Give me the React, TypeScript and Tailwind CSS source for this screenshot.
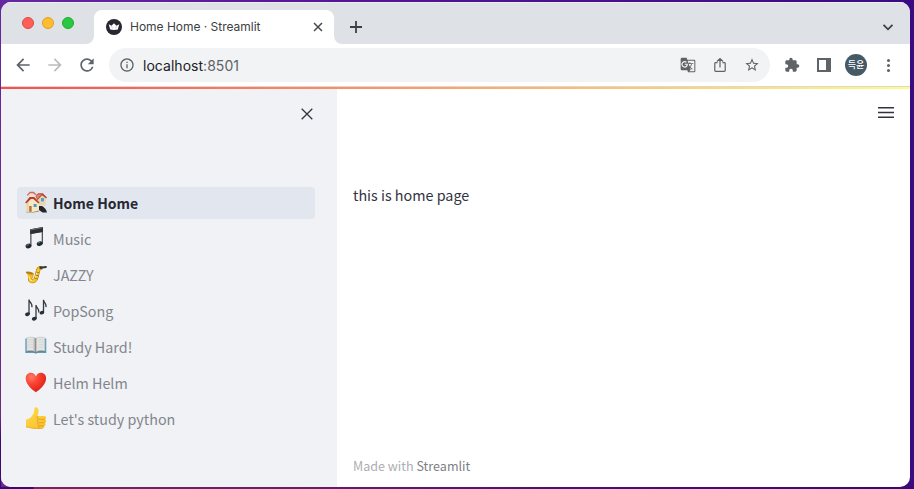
import type { ReactNode } from "react";
import {
  MdArrowBack,
  MdArrowForward,
  MdExtension,
  MdGTranslate,
  MdInfoOutline,
  MdRefresh,
  MdStarBorder,
} from "react-icons/md";

function HousesIcon() {
  return (
    <svg viewBox="0 0 22 22" className="h-[22px] w-[22px]">
      <path d="M2.500 3.500L5 1h4l2.500 3-2 3H3z" fill="#f0ddd3" />
      <path d="M1.800 4L4.800.7h4L12 4l-.8.6L8 2.200H5.300L2.600 4.800z" fill="#cf6a62" />
      <path d="M12.500 6L16.500 3.500 20.800 6.500v8h-7.500z" fill="#e9d7ae" />
      <path d="M10.500 5.500L13 2.200h4.800L22 6.600l-.8.8-4.200-3.200-4.500 5z" fill="#b9453a" />
      <path d="M13 3.200h3.500L12.500 8l-1.700-2z" fill="#d78375" />
      <rect x="16" y="7" width="3" height="3.400" fill="#5aa2cc" />
      <path d="M12.500 15h4.500c1.800 1 4.500 3.200 5 6.500h-4.500L14 19z" fill="#26262a" />
      <path d="M1.500 11.500L5 6.500h4.500l4.500 5.500v7.500L7 21.500l-5.500-1z" fill="#f8e8c2" />
      <path d="M1.500 11.500L3.800 9v11.800l-2.300-.5z" fill="#ead5a6" />
      <path d="M.2 11.500L4.600 6h4.600l5.300 5.500-.9 1L8.200 8H6L1.200 12.600z" fill="#b63c2e" />
      <rect x="8.600" y="13" width="3" height="3" fill="#4a9bc8" />
      <rect x="4.200" y="15" width="2.400" height="5.800" fill="#b0703f" />
      <path d="M1 20.700l6 .6 7-1.800v1l-6.500 1.300-6.500-.5z" fill="#8a8a68" />
    </svg>
  );
}

function NoteIcon() {
  return (
    <svg viewBox="0 0 22 22" className="h-[22px] w-[22px]">
      <path d="M5.200 2.500L18 0v17h-1.300V5L6.500 7V19H5.200z" fill="#50555b" />
      <path d="M5.200 2.300L18 0v5L5.200 7z" fill="#2f2e32" />
      <path d="M5.600 2.900l12-2.200" stroke="#7f7b82" strokeWidth=".8" />
      <ellipse cx="3.500" cy="19" rx="3" ry="2.300" transform="rotate(-15 3.500 19)" fill="#202b33" />
      <ellipse cx="14.700" cy="16.600" rx="3" ry="2.300" transform="rotate(-15 14.700 16.600)" fill="#202b33" />
      <path d="M1.700 18.500l2-1M12.900 16.100l2-1" stroke="#77848c" strokeWidth="1" />
    </svg>
  );
}

function SaxIcon() {
  return (
    <svg viewBox="0 0 22 22" className="h-[22px] w-[22px]" fill="none" strokeLinecap="round">
      <path d="M15.500 5.200c-2 0-2.500 1.500-3 4.300-.5 3.500-1.200 7.700-4 8.500-2.800.6-4-1-3.300-3.300L6.500 12" stroke="#b17a0c" strokeWidth="4.200" />
      <path d="M15.500 5.200c-2 0-2.500 1.500-3 4.300-.5 3.500-1.200 7.700-4 8.500-2.800.6-4-1-3.300-3.300L6.500 12" stroke="#f7c62f" strokeWidth="3.100" />
      <path d="M.8 9.300l7.800 1.500-2 4.500-3.600-.3c.2-2-.4-3.800-2.200-5.700z" fill="#f0b729" />
      <ellipse cx="4.700" cy="10" rx="4" ry="1.200" transform="rotate(12 4.700 10)" fill="#b67e14" />
      <path d="M4.300 13.500c-.4 2.600.5 4 2.500 4.100M12 8.500l-1.500 6" stroke="#ffec88" strokeWidth="1" />
      <path d="M11.500 9l2.500.8M10.800 12l2.500.8M9.800 15l2.500 1" stroke="#8d640b" strokeWidth=".8" />
      <path d="M14.500 3l2.700.8v2l-2.700.4z" fill="#3a3a32" />
      <path d="M17 4.500l4-.5" stroke="#34383a" strokeWidth="1.800" />
    </svg>
  );
}

function NotesIcon() {
  return (
    <svg viewBox="0 0 22 22" className="h-[22px] w-[22px]" fill="none" stroke="#343c42" strokeWidth="1.300">
      <path d="M4 15V.5c.2 3 4.200 4 2.700 7.800M11 19.800V6c.2 3 4 4 2.500 7.500M18.500 13.500V.8c.2 3 3.500 4 2.300 7.300" />
      <g fill="#25313a" stroke="none">
        <ellipse cx="2.500" cy="15.200" rx="2.500" ry="1.800" transform="rotate(-20 2.500 15.200)" />
        <ellipse cx="9.300" cy="19.700" rx="2.500" ry="1.800" transform="rotate(-20 9.300 19.700)" />
        <ellipse cx="16.900" cy="13.700" rx="2.400" ry="1.700" transform="rotate(-20 16.900 13.700)" />
      </g>
    </svg>
  );
}

function BookIcon() {
  return (
    <svg viewBox="0 0 22 22" className="h-[22px] w-[22px]">
      <path d="M.3 3.500h21V18h-9l-1.500.7-1.500-.7h-9z" fill="#5f9fbc" />
      <path d="M1.800 2.800C5 1.800 9 1.800 10.800 3.500c1.800-1.700 5.800-1.700 9-.7V16c-3.800-.7-6.500-.5-9 1.200-2.500-1.700-5.200-1.900-9-1.200z" fill="#e4e4e2" stroke="#b4babb" strokeWidth=".5" />
      <path d="M8.500 2.500c1 .2 2 .6 2.300 1v13.500c-.8-.7-1.300-1-2.300-1.200z" fill="#b9babb" />
      <path d="M10.300 3.200h1v14h-1z" fill="#77797b" />
      <path d="M3 5c2-.5 3.500-.5 5 0M3 7.500c2-.5 3.500-.5 5 0M3 10c2-.5 3.500-.5 5 0M3 12.500c2-.5 3.500-.5 5 0M13.500 5c1.500-.5 3.500-.5 5 0M13.500 7.500c1.500-.5 3.500-.5 5 0M13.500 10c1.500-.5 3.500-.5 5 0M13.500 12.500c1.500-.5 3.500-.5 5 0" fill="none" stroke="#cfd1d3" strokeWidth=".8" />
      <path d="M1 17c4-1 7.300-.7 9.800.8 2.500-1.500 5.800-1.800 9.800-.8" fill="none" stroke="#6e7779" strokeWidth=".8" />
    </svg>
  );
}

function HeartIcon() {
  return (
    <svg viewBox="0 0 22 22" className="h-[22px] w-[22px]">
      <defs>
        <radialGradient id="heart-fill" cx=".28" cy=".22" r=".85">
          <stop offset="0" stopColor="#ff7a66" />
          <stop offset=".4" stopColor="#fb4434" />
          <stop offset="1" stopColor="#dc1c18" />
        </radialGradient>
      </defs>
      <path d="M10.900 21.300C8 19.200.7 13.800.7 7.500.7 4 3 1.800 5.800 1.800c2.400 0 4.300 1.500 5.100 3.600.8-2.100 2.700-3.600 5.100-3.600 2.800 0 5.100 2.200 5.100 5.700 0 6.300-7.300 11.700-10.200 13.800z" fill="url(#heart-fill)" />
    </svg>
  );
}

function ThumbIcon() {
  return (
    <svg viewBox="0 0 22 22" className="h-[22px] w-[22px]">
      <defs>
        <linearGradient id="thumb-fill" x1="0" y1="0" x2="1" y2="1">
          <stop offset="0" stopColor="#ffdb49" />
          <stop offset="1" stopColor="#f9bf2d" />
        </linearGradient>
      </defs>
      <path d="M1 12.500c3.500-.3 5.700-2.500 7.300-5.500C9.500 4.800 8.700.5 10.800.3c2.700-.2 3.500 3.700 1.800 8.700h6.600c2.300.1 2.700 2.700.9 3.500 1.700.8 1.400 3-.2 3.600 1.300 1 .8 2.600-.7 3 .5 1.500-.5 2.600-2.200 2.600H9.500c-2.600 0-5-1.300-8.500-1.500z" fill="url(#thumb-fill)" />
      <path d="M12.600 9c-1 1.300-.6 2.700.5 3.300-1.100.8-.9 2.500.2 3.100-.9.900-.6 2.400.4 2.900-.6 1-.3 2.200.9 2.900M13.400 12.400H20M13.400 15.700h6M14 18.900h5" fill="none" stroke="#dc9420" strokeWidth=".7" />
      <path d="M1 19.800c3.500.2 5.500 1.600 8.500 1.600H17" fill="none" stroke="#e8a526" strokeWidth=".8" />
    </svg>
  );
}

const pages: { label: string; icon: ReactNode }[] = [
  { label: "Home Home", icon: <HousesIcon /> },
  { label: "Music", icon: <NoteIcon /> },
  { label: "JAZZY", icon: <SaxIcon /> },
  { label: "PopSong", icon: <NotesIcon /> },
  { label: "Study Hard!", icon: <BookIcon /> },
  { label: "Helm Helm", icon: <HeartIcon /> },
  { label: "Let's study python", icon: <ThumbIcon /> },
];

function TabStrip() {
  return (
    <div className="flex h-[42px] items-end bg-[#dee1e6] shadow-[inset_0_1px_0_#eceef1]">
      <div className="flex h-full w-[85px] items-start gap-2 pt-[15px] pl-[21px]">
        <span className="h-3 w-3 rounded-full border border-[#e2463f] bg-[#ff5f57]" />
        <span className="h-3 w-3 rounded-full border border-[#dfa023] bg-[#febc2e]" />
        <span className="h-3 w-3 rounded-full border border-[#1dad2b] bg-[#28c840]" />
      </div>
      <svg viewBox="0 0 8 8" className="h-2 w-2">
        <path d="M8 0v8H0a8 8 0 0 0 8-8z" fill="#fff" />
      </svg>
      <div className="flex h-[34px] w-[240px] items-center rounded-t-lg bg-white pr-[10px] pl-3">
        <svg viewBox="0 0 16 16" className="h-4 w-4">
          <circle cx="8" cy="8" r="8" fill="#262730" />
          <path d="M2.700 5.300l2.800 1.500L8 4.200l2.500 2.600 2.800-1.500-1.500 5.200c-2.400.6-5.200.6-7.600 0z" fill="#fff" />
          <path d="M5.500 6.800l1 2.500M10.500 6.800l-1 2.500" stroke="#aaa" strokeWidth=".5" />
        </svg>
        <span className="ml-2 grow text-[12px] tracking-[-0.02px] text-[#3c4043]">Home Home · Streamlit</span>
        <svg viewBox="0 0 12 12" className="h-3 w-3" stroke="#45494d" strokeWidth="1.500">
          <path d="M2 2l8 8M10 2l-8 8" />
        </svg>
      </div>
      <svg viewBox="0 0 8 8" className="h-2 w-2">
        <path d="M0 0v8h8a8 8 0 0 1-8-8z" fill="#fff" />
      </svg>
      <div className="flex h-[34px] grow items-center justify-between pr-[16px] pl-[7px]">
        <svg viewBox="0 0 14 14" className="h-[14px] w-[14px]" stroke="#3c4043" strokeWidth="1.800">
          <path d="M7 1v12M1 7h12" />
        </svg>
        <svg viewBox="0 0 12 12" className="h-3 w-3" fill="none" stroke="#3c4043" strokeWidth="1.800">
          <path d="M1.500 3.800L6 8.300l4.500-4.500" />
        </svg>
      </div>
    </div>
  );
}

function Toolbar() {
  return (
    <div className="flex h-[42px] items-center bg-white text-[#5f6368]">
      <div className="flex w-[108px] gap-3 pl-3">
        <MdArrowBack size={20} />
        <MdArrowForward size={20} color="#babcbe" />
        <MdRefresh size={20} />
      </div>
      <div className="flex h-[34px] w-[661px] items-center rounded-full bg-[#f1f3f4] pr-[10px] pl-[10px]">
        <MdInfoOutline size={16} />
        <span className="ml-2 grow text-[14px] tracking-[0.03px] text-[#202124]">
          localhost<span className="text-[#5f6368]">:8501</span>
        </span>
        <div className="flex items-center gap-4">
          <MdGTranslate size={16} />
          <svg viewBox="0 0 16 16" className="h-4 w-4" fill="none" stroke="#5f6368" strokeWidth="1.200">
            <path d="M5.500 5.600H3.600a.8.8 0 0 0-.8.8v7.200c0 .5.300.8.8.8h8.800c.5 0 .8-.3.8-.8V6.400a.8.8 0 0 0-.8-.8h-1.900M8 10.500V2M5 4.500l3-3 3 3" />
          </svg>
          <MdStarBorder size={16} />
        </div>
      </div>
      <MdExtension size={16} className="ml-[14px]" />
      <svg viewBox="0 0 14 14" className="ml-[17px] h-[14px] w-[14px]">
        <path d="M1 1h12v12H1z" fill="#fff" stroke="#5f6368" strokeWidth="2" />
        <path d="M9 0h5v14H9z" fill="#5f6368" />
      </svg>
      <div className="ml-[14px] flex h-[22px] w-[22px] items-center justify-center rounded-full bg-[#455a64] pb-px font-['Noto_Sans_CJK_KR',sans-serif] text-[9px] leading-none font-medium text-white">
        <span className="whitespace-nowrap">득윤</span>
      </div>
      <div className="ml-5 flex flex-col gap-[2px]">
        <span className="h-[3px] w-[3px] rounded-full bg-[#5f6368]" />
        <span className="h-[3px] w-[3px] rounded-full bg-[#5f6368]" />
        <span className="h-[3px] w-[3px] rounded-full bg-[#5f6368]" />
      </div>
    </div>
  );
}

function Sidebar() {
  return (
    <aside className="w-[336px] bg-[#f0f2f6] px-4">
      <div className="flex h-[98px] justify-end pt-[19px] pr-2">
        <svg viewBox="0 0 12 12" className="h-3 w-3" stroke="#31333f" strokeWidth="1.300">
          <path d="M.7.7l10.600 10.600M11.300.7L.7 11.300" />
        </svg>
      </div>
      <nav className="flex w-[298px] flex-col gap-1">
        {pages.map((page, index) => (
          <a
            key={page.label}
            className={
              index === 0
                ? "flex h-8 items-center gap-[6px] rounded bg-[#e1e6ef] pl-2 text-[14px] font-bold text-[#262730]"
                : "flex h-8 items-center gap-[6px] rounded pl-2 text-[14.35px] text-[#84858c]"
            }
          >
            <span className="-mt-[2px]">{page.icon}</span>
            <span className="leading-5">{page.label}</span>
          </a>
        ))}
      </nav>
    </aside>
  );
}

export default function App() {
  return (
    <div className="h-[489px] w-[914px] bg-[linear-gradient(90deg,#3f0870_0_33px,#782362_34px,#6a1c68_300px,#4c1070_560px,#3a0870_100%),linear-gradient(180deg,#6426a0,#6c2a80_85%,#3c0a70_90%),linear-gradient(90deg,#6628a0,#501494_45%,#3b0a82_100%)] bg-[position:bottom_left,top_left,top_left] bg-[size:100%_2px,1px_100%,100%_100%] bg-no-repeat pt-[2px] pr-1 pb-[2px] pl-px font-['Inter',sans-serif]">
      <div className="flex h-[485px] w-[909px] flex-col overflow-hidden rounded-[10px] bg-white">
        <TabStrip />
        <Toolbar />
        <div className="h-px bg-[#d5d8dc]" />
        <div className="h-[2px] bg-[linear-gradient(90deg,#ff4b4b,#fffd80)]" />
        <div className="flex grow font-['Noto_Sans_CJK_SC',sans-serif]">
          <Sidebar />
          <main className="flex grow flex-col justify-between pr-4 pl-4">
            <div>
              <div className="flex h-[96px] justify-end pt-[18px]">
                <svg viewBox="0 0 16 11" className="h-[11px] w-4" fill="#31333f">
                  <path d="M0 0h16v1.500H0zM0 4.700h16v1.600H0zM0 9.400h16v1.600H0z" />
                </svg>
              </div>
              <p className="text-[14.35px] leading-5 text-[#31333f]">this is home page</p>
            </div>
            <footer className="pb-[11px] text-[12.55px] leading-5 text-[#adaeb2]">
              Made with <span className="text-[#7e7f86]">Streamlit</span>
            </footer>
          </main>
        </div>
      </div>
    </div>
  );
}
